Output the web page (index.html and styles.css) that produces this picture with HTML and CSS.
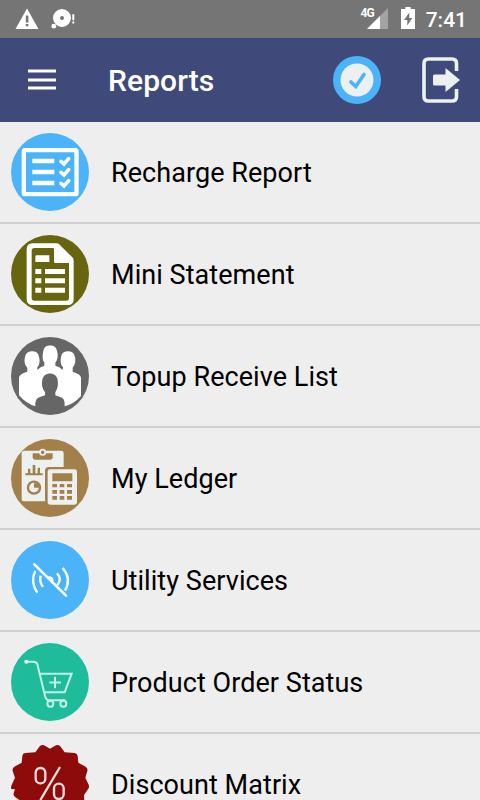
FILE: index.html
```html
<!DOCTYPE html>
<html lang="en">
<head>
    <meta charset="UTF-8">
    <meta name="viewport" content="width=device-width, initial-scale=1.0">
    <title>Reports</title>

    <link rel="stylesheet" href="styles.css">
</head>
<body>

    <!-- Status bar -->
    <div class="status-bar">
        <svg class="status-warning" viewBox="0 0 24 22">
            <path fill="#fff" fill-rule="evenodd" d="M12 0.500L23.500 21H0.500ZM10.800 7.500V14.500H13.400V7.500ZM10.800 16V18.300H13.400V16Z"/>
        </svg>
        <svg class="status-disc" viewBox="0 0 24 22">
            <path fill="#fff" fill-rule="evenodd" d="M11 1a9 9 0 1 1 0 18a9 9 0 1 1 0-18ZM11 8a2 2 0 1 0 0 4a2 2 0 1 0 0-4Z"/>
            <circle cx="2.800" cy="18.200" r="2.400" fill="#fff"/>
            <path fill="#fff" d="M21.300 6.300h2v6h-2zM21.300 13.500h2v2h-2z"/>
        </svg>
        <span class="network">4G</span>
        <svg class="status-signal" viewBox="0 0 21 21">
            <path fill="#a3a3a3" d="M21 0V21H0Z"/>
            <path fill="#fff" d="M13 8V21H0Z"/>
        </svg>
        <svg class="status-battery" viewBox="0 0 14 22">
            <path fill="#fff" d="M4.300 0H9.700V2H14V22H0V2H4.300Z"/>
            <path fill="#757575" d="M8.300 5.500L3 13H6.300V18.500L11.300 11H8.300Z"/>
        </svg>
        <span class="clock">7:41</span>
    </div>

    <!-- App bar -->
    <div class="header">
        <button class="menu-btn" aria-label="Menu">
            <span></span>
            <span></span>
            <span></span>
        </button>
        <h1>Reports</h1>
        <svg class="check-icon" viewBox="0 0 48 48">
            <circle cx="24" cy="24" r="24" fill="#4bb4f8"/>
            <circle cx="24" cy="24" r="16.500" fill="#ecf0f1"/>
            <path d="M18 26L22.800 30.500L31 18.500" fill="none" stroke="#4bb4f8" stroke-width="3.600" stroke-linecap="round"/>
        </svg>
        <svg class="logout-icon" viewBox="0 0 38 46">
            <path d="M34.500 14V6.500Q34.500 2 30 2H6.500Q2 2 2 6.500V39.500Q2 44 6.500 44H30Q34.500 44 34.500 39.500V32" fill="none" stroke="#ecf0f1" stroke-width="3.600"/>
            <path d="M12.500 17.500H23.500V11L38 23L23.500 35V28.500H12.500Q11 28.500 11 27V19Q11 17.500 12.500 17.500Z" fill="#ecf0f1"/>
        </svg>
    </div>

    <!-- Reports list -->
    <ul class="report-list">
        <li class="report-item">
            <svg class="report-icon" viewBox="33 24 234 234">
                <circle cx="150" cy="141" r="117" fill="#4bb4f8"/>
                <rect x="71.500" y="75.500" width="158" height="132" rx="3" fill="none" stroke="#fff" stroke-width="13"/>
                <path d="M97 108H163M97 141H163M97 174H163" stroke="#fff" stroke-width="14"/>
                <path d="M183 109L192 117L206 101M183 142L192 150L206 134M183 175L192 183L206 167" fill="none" stroke="#fff" stroke-width="11" stroke-linecap="round"/>
            </svg>
            <span class="report-name">Recharge Report</span>
        </li>
        <li class="report-item">
            <svg class="report-icon" viewBox="33 30 234 234">
                <circle cx="150" cy="147" r="117" fill="#68650f"/>
                <path fill="#fff" fill-rule="evenodd" d="M98 55H169Q175 55 179 59L217 97Q221 101 221 107V222Q221 240 203 240H98Q80 240 80 222V73Q80 55 98 55ZM103 69Q95 69 95 77V219Q95 227 103 227H199Q207 227 207 219V114H166Q162 114 162 110V73Q162 69 158 69Z"/>
                <path fill="#fff" d="M110 91H148V111H106V95Q106 91 110 91ZM106 132H124V147H106ZM106 160H124V175H106ZM106 188H124V203H106ZM135 132H195V147H135ZM135 160H195V175H135ZM135 188H195V203H135Z"/>
            </svg>
            <span class="report-name">Mini Statement</span>
        </li>
        <li class="report-item">
            <svg class="report-icon" viewBox="33 30 234 234">
                <circle cx="150" cy="147" r="117" fill="#666"/>
                <path fill="#fff" d="M82 122C72 112 72 96 77 84C80 70 111 68 115 83C120 96 121 110 112 121L112 129Q119 120 133 116V106C125 97 128 80 131 68C134 51 167 51 170 68C175 82 174 98 166 107V116Q181 120 188 129L189 121C180 111 181 96 185 83C190 68 220 70 223 84C228 97 227 112 218 122V134Q243 142 243 152V207Q222 231 194 238Q196 212 180 210L166 205V196C174 184 175 171 173 159C170 133 130 133 127 159C124 171 126 184 135 196V205L120 210Q104 214 106 238Q78 230 57 205V152Q57 141 82 134Z"/>
            </svg>
            <span class="report-name">Topup Receive List</span>
        </li>
        <li class="report-item">
            <svg class="report-icon" viewBox="33 33 234 234">
                <circle cx="150" cy="150" r="117" fill="#a38049"/>
                <rect x="65" y="68" width="126" height="152" rx="8" fill="#ecf0f1"/>
                <path fill="#a38049" d="M98 76H158V88Q158 95 151 95H105Q98 95 98 88Z"/>
                <circle cx="128" cy="73" r="8" fill="#a38049" stroke="#ecf0f1" stroke-width="5"/>
                <path fill="#a38049" d="M76 136H128V142H76ZM84 122H91V137H84ZM98 111H106V137H98ZM113 119H120V137H113Z"/>
                <circle cx="102" cy="179" r="18" fill="none" stroke="#a38049" stroke-width="7"/>
                <path fill="#a38049" d="M102 164V179H119L115 168Z"/>
                <path fill="#a38049" d="M135 224V128Q135 117 146 117H232V230H141Z"/>
                <rect x="143" y="124" width="88" height="106" rx="7" fill="#ecf0f1"/>
                <path fill="#a38049" d="M157 136H217V160H157ZM157 168H171V178H157ZM179 168H193V178H179ZM201 168H216V178H201ZM157 186H171V197H157ZM179 186H193V197H179ZM201 186H216V197H201ZM157 204H171V215H157ZM179 204H193V215H179ZM201 204H216V215H201Z"/>
            </svg>
            <span class="report-name">My Ledger</span>
        </li>
        <li class="report-item">
            <svg class="report-icon" viewBox="33 33 234 234">
                <circle cx="150" cy="150" r="117" fill="#4bb4f8"/>
                <path d="M103 103L198 197" stroke="#fff" stroke-width="8" stroke-linecap="round"/>
                <path d="M106 122Q90 156 112 188M122 137Q117 156 129 170M188 114Q216 147 195 182M171 130Q187 148 172 165" fill="none" stroke="#fff" stroke-width="7"/>
                <path d="M140 143Q150 134 159 144Q163 150 158 159Z" fill="#fff"/>
            </svg>
            <span class="report-name">Utility Services</span>
        </li>
        <li class="report-item">
            <svg class="report-icon" viewBox="33 33 234 234">
                <circle cx="150" cy="150" r="117" fill="#1fbc9c"/>
                <g fill="none" stroke="#c5f0e6" stroke-width="6">
                    <path d="M79 89H101Q109 89 112 97L136 195Q139 205 147 205H196"/>
                    <path d="M121 125H215L194 181H133"/>
                    <path d="M165 134V169M148 151.500H183"/>
                    <circle cx="151" cy="215" r="9" fill="#1fbc9c"/>
                    <circle cx="190" cy="215" r="9" fill="#1fbc9c"/>
                </g>
                <circle cx="79" cy="89.500" r="6" fill="#e8f9f5"/>
            </svg>
            <span class="report-name">Product Order Status</span>
        </li>
        <li class="report-item">
            <svg class="report-icon" viewBox="33 45 234 234">
                <path fill="#8e0b0b" d="M150 56L168 46Q177 43 182 50L194 67L224 69Q232 70 233 78L235 98L257 110Q264 115 262 123L256 143L266 164Q269 171 264 178L252 195L253 214Q252 222 245 225L226 234L217 254Q213 261 205 260L184 259L168 273Q162 279 155 275L138 265L119 270Q111 272 107 265L95 247L74 243Q66 241 65 233L63 213L46 202Q39 197 41 190L45 178L34 177Q32 171 35 165L45 143L38 123Q36 115 43 110L65 98L67 77Q68 70 76 69L106 67L118 50Q123 43 132 46Z"/>
                <rect x="107" y="114" width="29" height="46" rx="14" fill="none" stroke="#f3dede" stroke-width="7"/>
                <rect x="162" y="161" width="29" height="46" rx="14" fill="none" stroke="#f3dede" stroke-width="7"/>
                <path d="M180 111L121 210" stroke="#f3dede" stroke-width="7"/>
            </svg>
            <span class="report-name">Discount Matrix</span>
        </li>
    </ul>

</body>
</html>
```
FILE: styles.css
```css
* {
    margin: 0;
    padding: 0;
    box-sizing: border-box;
    font-family: Roboto, sans-serif;
}

body {
    background-color: #eeeeee;
    height: 100vh;
    display: flex;
    flex-direction: column;
    overflow: hidden;
}

.status-bar {
    height: 38px;
    flex: none;
    background-color: #757575;
    color: #fff;
    display: flex;
    align-items: flex-start;
    padding: 8px 13px 0 15px;
}

.status-warning {
    width: 24px;
    height: 22px;
}

.status-disc {
    width: 24px;
    height: 22px;
    margin-left: 12px;
}

.network {
    margin-left: auto;
    margin-right: -7px;
    font-size: 12px;
    font-weight: 700;
    line-height: 11px;
    letter-spacing: -1px;
}

.status-signal {
    width: 21px;
    height: 21px;
}

.status-battery {
    width: 14px;
    height: 22px;
    margin: -1px 11px 0 13px;
}

.clock {
    font-size: 21px;
    font-weight: 500;
    line-height: 24px;
}

.header {
    height: 84px;
    flex: none;
    background-color: #404a7a;
    color: #fff;
    display: flex;
    align-items: center;
    padding: 0 20px 0 28px;
}

.menu-btn {
    width: 28px;
    height: 21px;
    margin-bottom: 1px;
    background: none;
    border: none;
    display: flex;
    flex-direction: column;
    justify-content: space-between;
}

.menu-btn span {
    height: 4px;
    width: 100%;
    background-color: #fff;
    border-top: 1px solid #9fa4bc;
    border-bottom: 1px solid #9fa4bc;
}

.header h1 {
    margin-left: 52px;
    margin-right: auto;
    padding-top: 1px;
    font-size: 30px;
    font-weight: 500;
    letter-spacing: 0.1px;
}

.check-icon {
    width: 48px;
    height: 48px;
    margin-right: 41px;
}

.logout-icon {
    width: 38px;
    height: 46px;
}

.report-list {
    list-style: none;
}

.report-item {
    height: 102px;
    border-bottom: 2px solid #d0d0d0;
    display: flex;
    align-items: center;
    padding-left: 11px;
}

.report-icon {
    width: 78px;
    height: 78px;
}

.report-name {
    margin-left: 22px;
    padding-top: 2px;
    font-size: 27px;
    letter-spacing: 0.06px;
    color: #000;
}
```
